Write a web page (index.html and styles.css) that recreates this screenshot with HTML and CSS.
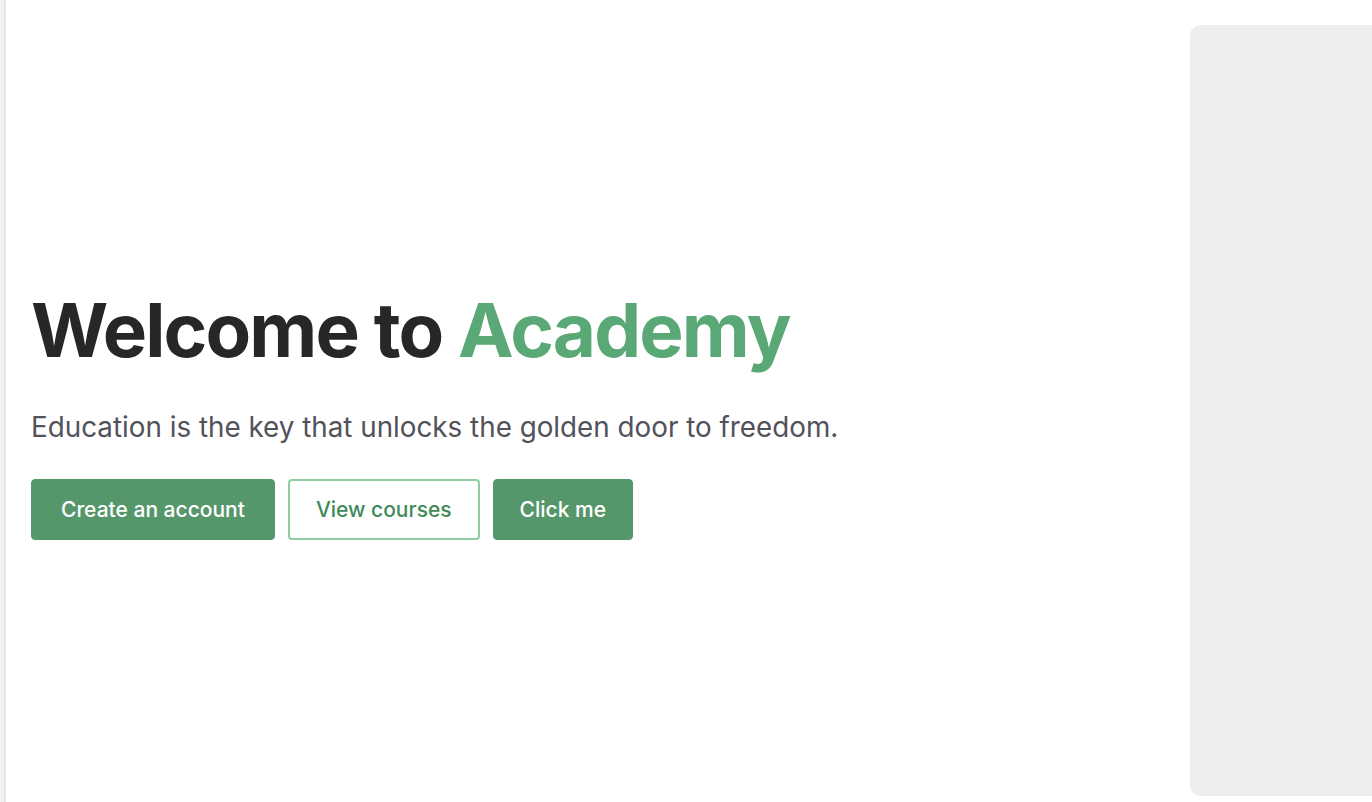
FILE: index.html
```html
<!DOCTYPE html>
<html lang="en">
<head>
  <meta charset="UTF-8">
  <meta name="viewport" content="width=device-width, initial-scale=1.0">
  <title>Academy</title>
  <link rel="stylesheet" href="styles.css">
</head>
<body>
  <div class="rail"></div>
  <main class="page">
    <section class="hero">
      <h1>Welcome to <span class="accent">Academy</span></h1>
      <p class="lead">Education is the key that unlocks the golden door to freedom.</p>
      <div class="actions">
        <button class="btn btn-solid btn-wide">Create an account</button>
        <button class="btn btn-outline">View courses</button>
        <button class="btn btn-solid">Click me</button>
      </div>
    </section>
    <aside class="media"></aside>
  </main>
</body>
</html>
```
FILE: styles.css
```css
html, body {
  height: 100%;
}
body {
  margin: 0;
  display: flex;
  background: #fff;
  font-family: Inter, "Noto Sans", sans-serif;
  overflow: hidden;
}
.rail {
  width: 4px;
  background: #f3f3f3;
  border-right: 2px solid #e6e6e6;
  flex: none;
}
.page {
  flex: 1;
  display: flex;
  padding: 25px 0 6px 25px;
}
.hero {
  flex: 1;
  display: flex;
  flex-direction: column;
  justify-content: center;
  padding-top: 9px;
}
h1 {
  margin: 0;
  font-size: 74.5px;
  font-weight: 700;
  letter-spacing: -0.025em;
  line-height: 1.1;
  color: #27272a;
}
.accent {
  color: #5ba877;
}
.lead {
  margin: 38px 0 0;
  font-size: 27.8px;
  color: #52525b;
}
.actions {
  display: flex;
  gap: 13px;
  margin-top: 35px;
}
.btn {
  font-family: Inter, "Noto Sans", sans-serif;
  font-size: 21px;
  font-weight: 500;
  height: 61px;
  padding: 0 26px;
  border-radius: 4px;
  cursor: pointer;
}
.btn-wide {
  padding: 0 29px;
}
.btn-solid {
  background: #55976b;
  border: 1px solid #55976b;
  color: #fff;
}
.btn-outline {
  background: #fff;
  border: 2px solid #8fcca3;
  color: #3f8a59;
}
.media {
  flex: none;
  width: 182px;
  background: #eeeeee;
  border-radius: 10px 0 0 10px;
}
```
